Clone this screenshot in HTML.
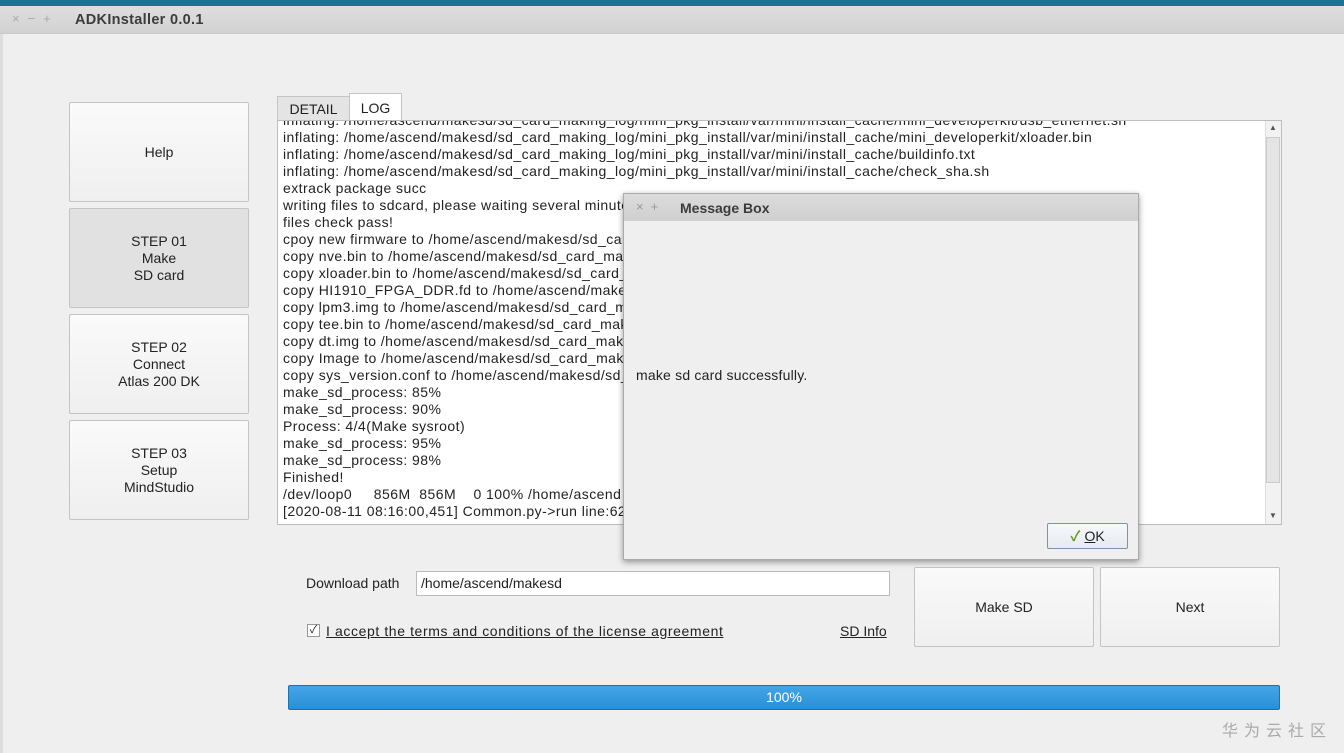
<!DOCTYPE html>
<html><head><meta charset="utf-8"><style>
*{box-sizing:border-box;margin:0;padding:0}
body{width:1344px;height:753px;background:#efefef;font-family:"Liberation Sans","Noto Sans CJK SC",sans-serif;font-size:14px;color:#222;position:relative;overflow:hidden}
.abs{position:absolute}
.btn{position:absolute;background:linear-gradient(#fafafa,#efefef);border:1px solid #c4c4c4;border-radius:2px;display:flex;align-items:center;justify-content:center;text-align:center;line-height:17px;color:#222}
.log div{height:17px;line-height:17px;white-space:nowrap;letter-spacing:0.45px}
</style></head><body>
<div class="abs" style="left:0;top:0;width:1344px;height:6px;background:#17758f"></div>
<div class="abs" style="left:0;top:6px;width:1344px;height:28px;background:linear-gradient(#dedede,#d2d2d2);border-bottom:1px solid #c8c8c8"></div>
<div class="abs" style="left:12px;top:11px;color:#aaa;font-size:13px;letter-spacing:8px">×−+</div>
<div class="abs" style="left:75px;top:12px;font-weight:bold;color:#3c3c3c;font-size:14.5px;letter-spacing:0.3px">ADKInstaller 0.0.1</div>
<div class="abs" style="left:0;top:34px;width:3px;height:719px;background:#ddd"></div>

<div class="btn" style="left:69px;top:102px;width:180px;height:100px">Help</div>
<div class="btn" style="left:69px;top:208px;width:180px;height:100px;background:#e1e1e1">STEP 01<br>Make<br>SD card</div>
<div class="btn" style="left:69px;top:314px;width:180px;height:100px">STEP 02<br>Connect<br>Atlas 200 DK</div>
<div class="btn" style="left:69px;top:420px;width:180px;height:100px">STEP 03<br>Setup<br>MindStudio</div>

<div class="abs" style="left:277px;top:96px;width:73px;height:25px;background:#e4e4e4;border:1px solid #c4c4c4;border-bottom:none;text-align:center;line-height:24px">DETAIL</div>
<div class="abs" style="left:349px;top:93px;width:53px;height:28px;background:#fff;border:1px solid #c4c4c4;border-bottom:none;text-align:center;line-height:28px">LOG</div>
<div class="abs" style="left:277px;top:120px;width:1005px;height:405px;background:#fff;border:1px solid #bdbdbd;overflow:hidden">
 <div class="log abs" style="left:5px;top:-9px">
 <div>inflating: /home/ascend/makesd/sd_card_making_log/mini_pkg_install/var/mini/install_cache/mini_developerkit/usb_ethernet.sh</div>
 <div>inflating: /home/ascend/makesd/sd_card_making_log/mini_pkg_install/var/mini/install_cache/mini_developerkit/xloader.bin</div>
 <div>inflating: /home/ascend/makesd/sd_card_making_log/mini_pkg_install/var/mini/install_cache/buildinfo.txt</div>
 <div>inflating: /home/ascend/makesd/sd_card_making_log/mini_pkg_install/var/mini/install_cache/check_sha.sh</div>
 <div>extrack package succ</div>
 <div>writing files to sdcard, please waiting several minutes</div>
 <div>files check pass!</div>
 <div>cpoy new firmware to /home/ascend/makesd/sd_card</div>
 <div>copy nve.bin to /home/ascend/makesd/sd_card_making</div>
 <div>copy xloader.bin to /home/ascend/makesd/sd_card_ma</div>
 <div>copy HI1910_FPGA_DDR.fd to /home/ascend/makesd/s</div>
 <div>copy lpm3.img to /home/ascend/makesd/sd_card_mak</div>
 <div>copy tee.bin to /home/ascend/makesd/sd_card_making</div>
 <div>copy dt.img to /home/ascend/makesd/sd_card_making</div>
 <div>copy Image to /home/ascend/makesd/sd_card_making</div>
 <div>copy sys_version.conf to /home/ascend/makesd/sd_card</div>
 <div>make_sd_process: 85%</div>
 <div>make_sd_process: 90%</div>
 <div>Process: 4/4(Make sysroot)</div>
 <div>make_sd_process: 95%</div>
 <div>make_sd_process: 98%</div>
 <div>Finished!</div>
 <div>/dev/loop0&nbsp;&nbsp;&nbsp;&nbsp;&nbsp;856M&nbsp;&nbsp;856M&nbsp;&nbsp;&nbsp;&nbsp;0 100% /home/ascend</div>
 <div>[2020-08-11 08:16:00,451] Common.py-&gt;run line:62</div>
 </div>
 <div class="abs" style="left:987px;top:0;width:16px;height:403px;background:#f2f2f2;border-left:1px solid #ddd"></div>
 <div class="abs" style="left:988px;top:16px;width:14px;height:346px;background:#e4e4e4;border:1px solid #ccc"></div>
 <div class="abs" style="left:991px;top:2px;font-size:8px;color:#555">▲</div>
 <div class="abs" style="left:991px;top:390px;font-size:8px;color:#555">▼</div>
</div>

<div class="abs" style="left:623px;top:193px;width:516px;height:367px;background:#efefef;border:1px solid #aaa;box-shadow:0 2px 6px rgba(0,0,0,.4)">
 <div style="height:27px;background:linear-gradient(#dcdcdc,#cfcfcf);position:relative">
  <span class="abs" style="left:12px;top:5px;color:#999;font-size:13px;letter-spacing:7px">×+</span>
  <span class="abs" style="left:56px;top:6px;font-weight:bold;color:#3c3c3c">Message Box</span>
 </div>
 <div class="abs" style="left:12px;top:173px;letter-spacing:0.2px">make sd card successfully.</div>
 <div class="btn" style="left:423px;top:329px;width:81px;height:26px;border-color:#7a93b0;background:linear-gradient(#f6f8fb,#e6ebf0)"><span style="color:#6a9a1f;font-weight:bold;margin-right:4px">✓</span><u>O</u>K</div>
</div>

<div class="abs" style="left:306px;top:575px">Download path</div>
<div class="abs" style="left:416px;top:571px;width:474px;height:25px;background:#fff;border:1px solid #bbb;padding-left:4px;line-height:23px">/home/ascend/makesd</div>
<div class="abs" style="left:307px;top:624px;width:13px;height:13px;border:1px solid #999;background:#fff;font-size:11px;line-height:11px;text-align:center">✓</div>
<div class="abs" style="left:326px;top:623px;text-decoration:underline;letter-spacing:0.6px">I accept the terms and conditions of the license agreement</div>
<div class="abs" style="left:840px;top:623px;text-decoration:underline">SD Info</div>
<div class="btn" style="left:914px;top:567px;width:180px;height:80px">Make SD</div>
<div class="btn" style="left:1100px;top:567px;width:180px;height:80px">Next</div>

<div class="abs" style="left:288px;top:685px;width:992px;height:25px;background:linear-gradient(#42a6e6,#2a8ed6);border:1px solid #1f6fa8;border-radius:2px;color:#fff;text-align:center;line-height:23px">100%</div>
<div class="abs" style="left:1222px;top:717px;color:#aaa;font-size:16px;letter-spacing:6px">华为云社区</div>
</body></html>
